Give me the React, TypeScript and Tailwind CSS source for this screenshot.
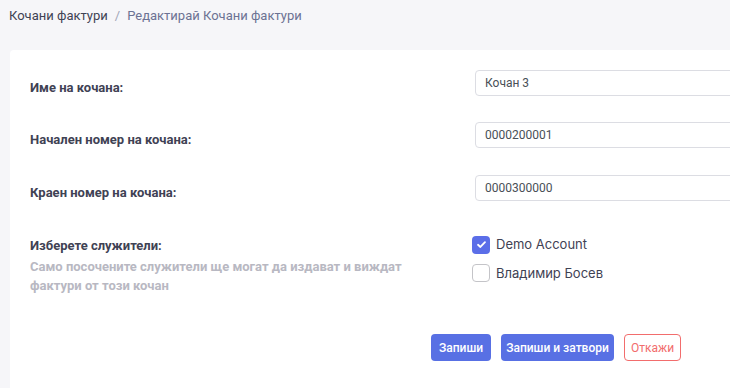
import React from "react";

export default function App() {
  const label = "shrink-0 w-[445px] pt-[9px] text-[13px] font-bold text-[#3f4254]";
  const input =
    "h-[26px] w-[300px] shrink-0 rounded-[4px] border border-[#dcdde3] bg-white px-[9px] text-[12px] text-[#495057] outline-none";
  return (
    <div
      className="h-[388px] w-[730px] overflow-hidden bg-[#f6f6f9]"
      style={{ fontFamily: "Roboto, 'Liberation Sans', sans-serif" }}
    >
      <div className="flex h-[32px] items-center pl-[9px] text-[13px]" style={{ fontFamily: "Roboto, sans-serif" }}>
        <span className="text-[#3f4254]">Кочани фактури</span>
        <span className="mx-[7px] text-[#a1a5b7]">/</span>
        <span className="text-[#6c7293]">Редактирай Кочани фактури</span>
      </div>
      <div className="ml-[10px] mt-[18px] w-[760px] rounded-tl-[4px] bg-white pl-[20px] pt-[20px] pb-[30px]">
        <div className="flex h-[26px] items-center">
          <div className={label}>Име на кочана:</div>
          <input className={input} defaultValue="Кочан 3" />
        </div>
        <div className="mt-[26px] flex h-[26px] items-center">
          <div className={label}>Начален номер на кочана:</div>
          <input className={input} defaultValue="0000200001" />
        </div>
        <div className="mt-[27px] flex h-[26px] items-center">
          <div className={label}>Краен номер на кочана:</div>
          <input className={input} defaultValue="0000300000" />
        </div>
        <div className="mt-[34px] flex">
          <div className="w-[442px] shrink-0 pt-[2px]">
            <div className="text-[13px] font-bold leading-[18px] text-[#3f4254]">Изберете служители:</div>
            <div className="mt-[2px] w-[400px] text-[13px] font-bold leading-[19px] text-[#b8b8c2]">
              Само посочените служители ще могат да издават и виждат фактури от този кочан
            </div>
          </div>
          <div className="flex flex-col gap-[9px]" style={{ fontFamily: "Inter, sans-serif" }}>
            <label className="flex items-center gap-[6px] text-[13px] text-[#3f4254]">
              <span className="flex h-[18px] w-[18px] items-center justify-center rounded-[4px] bg-[#5b6ee8]">
                <svg width="11" height="11" viewBox="0 0 12 12">
                  <path d="M2.2 6.3 L4.8 8.7 L9.8 3.4" fill="none" stroke="white" strokeWidth="2" strokeLinecap="round" strokeLinejoin="round" />
                </svg>
              </span>
              Demo Account
            </label>
            <label className="flex items-center gap-[6px] text-[13px] text-[#3f4254]">
              <span className="h-[18px] w-[18px] rounded-[4px] border-[1.5px] border-[#c4c4c8] bg-white" />
              Владимир Босев
            </label>
          </div>
        </div>
        <div className="mt-[39px] flex gap-[10px] pl-[401px]" style={{ fontFamily: "Roboto, sans-serif" }}>
          <button className="flex h-[27px] w-[60px] items-center justify-center rounded-[4px] bg-[#5870e4] text-[12px] font-medium text-white">Запиши</button>
          <button className="flex h-[27px] w-[113px] items-center justify-center rounded-[4px] bg-[#5870e4] text-[12px] font-medium text-white">Запиши и затвори</button>
          <button className="flex h-[27px] w-[57px] items-center justify-center rounded-[4px] border border-[#f26d6d] bg-white text-[12px] text-[#f26d6d]">Откажи</button>
        </div>
      </div>
    </div>
  );
}
